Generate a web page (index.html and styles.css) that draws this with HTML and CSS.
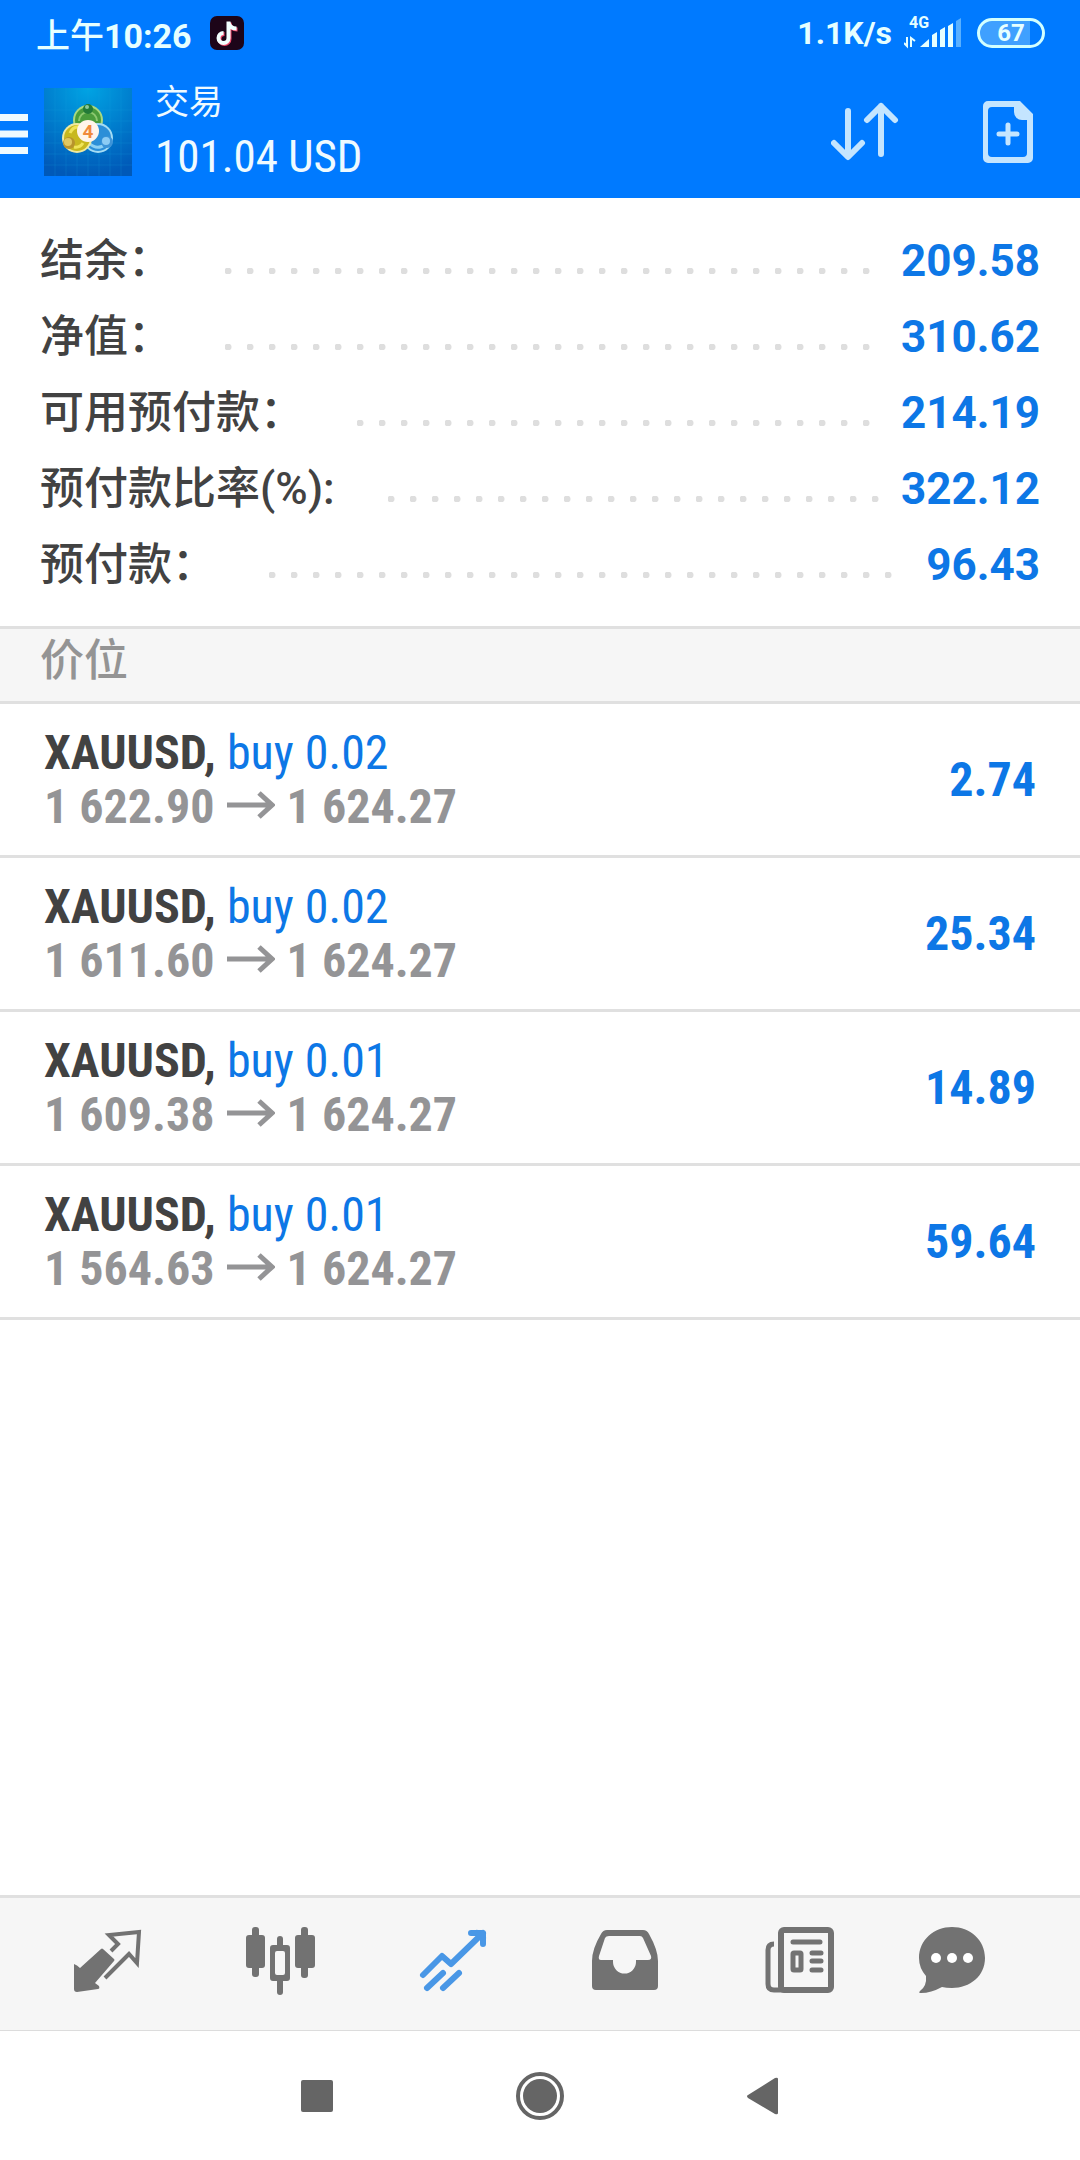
FILE: index.html
```html
<!DOCTYPE html>
<html lang="zh-CN">
<head>
<meta charset="utf-8">
<meta name="viewport" content="width=device-width, initial-scale=1">
<title>交易</title>
<link rel="stylesheet" href="styles.css">
</head>
<body>
<div class="app">
  <div class="status">
    <span class="clock">上午<b>10:26</b></span>
    <svg class="note" width="34" height="34" viewBox="0 0 34 34" aria-hidden="true">
      <rect width="34" height="34" rx="7" fill="#1d0519"/>
      <path d="M18.500 5.500v16.500a5 5 0 1 1-5-5M18.500 6c.5 4 3.500 6.500 8 6.500" fill="none" stroke="#f0486c" stroke-width="4" transform="translate(1 1)"/>
      <path d="M18.500 5.500v16.500a5 5 0 1 1-5-5M18.500 6c.5 4 3.500 6.500 8 6.500" fill="none" stroke="#f2ffff" stroke-width="4"/>
    </svg>
    <span class="speed">1.1K/s</span>
    <svg class="signal" width="58" height="38" viewBox="0 -2 58 38" aria-label="4G">
      <text class="net" x="5" y="12">4G</text>
      <path d="M3 21v9l-3-3M7 31v-9l4 3" fill="none" stroke="#e6ffff" stroke-width="2"/>
      <path d="M16 31l9-8v8zM28 19l5-3v15h-5zM36 14l5-3v20h-5zM44 10l5-3v24h-5z" fill="#e6ffff"/>
      <path d="M52 5l5-3v29h-5z" fill="#59b0ff"/>
    </svg>
    <span class="battery">67</span>
  </div>
  <header class="top">
    <button class="menu" aria-label="菜单">
      <svg width="28" height="40" viewBox="0 0 28 40"><path d="M0 3.500h28M0 20h28M0 36.500h28" stroke="#effaff" stroke-width="7"/></svg>
    </button>
    <svg class="logo" width="88" height="88" viewBox="0 0 88 88" aria-hidden="true">
      <defs>
        <radialGradient id="sea" cx=".5" cy="0" r="1"><stop offset="0" stop-color="#00a4e4"/><stop offset="1" stop-color="#0059b8"/></radialGradient>
      </defs>
      <rect width="88" height="88" fill="url(#sea)"/>
      <path d="M11 0v88M22 0v88M33 0v88M44 0v88M55 0v88M66 0v88M77 0v88M0 22h88M0 33h88M0 44h88M0 55h88M0 66h88M0 77h88" stroke="#1aa0dc" stroke-opacity=".2"/>
      <circle cx="44" cy="32" r="15" fill="#a8d880"/>
      <circle cx="44" cy="32" r="13" fill="#4a9c3c"/>
      <path d="M35 33a9 9 0 0 1 18 0" fill="none" stroke="#8cc870" stroke-width="2"/>
      <circle cx="54" cy="50" r="15" fill="#a4dcf4"/>
      <circle cx="54" cy="50" r="13" fill="#2c8fd8"/>
      <path d="M45 55q8 8 17 1" fill="none" stroke="#8cd0f4" stroke-width="3"/>
      <circle cx="33" cy="50" r="15" fill="#efe9a0"/>
      <circle cx="33" cy="50" r="13" fill="#c8b81e"/>
      <path d="M26 45q3-7 10-6M30 59q6 1 9-4" fill="none" stroke="#f0e458" stroke-width="3"/>
      <circle cx="44" cy="21" r="5" fill="#237a38"/>
      <circle cx="43" cy="19" r="2" fill="#8cc89c"/>
      <circle cx="25" cy="55" r="6" fill="#b8942c"/>
      <circle cx="24" cy="54" r="4" fill="#e0c860"/>
      <circle cx="63" cy="54" r="6" fill="#3c94d8"/>
      <circle cx="62" cy="53" r="4" fill="#8cccf4"/>
      <circle cx="44" cy="43" r="11" fill="#fff4ea"/>
      <text class="mark" x="44" y="50">4</text>
    </svg>
    <div class="heading">
      <h1>交易</h1>
      <p class="profit">101.04 USD</p>
    </div>
    <button class="sort" aria-label="排序">
      <svg width="68" height="60" viewBox="0 0 68 60"><path d="M17 9v45M3 41l14 14 14-14M50 52V4M36 18L50 4l14 14" fill="none" stroke="#c4e5ff" stroke-width="6" stroke-linecap="round" stroke-linejoin="round"/></svg>
    </button>
    <button class="add" aria-label="新订单">
      <svg width="50" height="62" viewBox="0 0 50 62"><path fill-rule="evenodd" d="M5 0h32l13 13v44a5 5 0 0 1-5 5H5a5 5 0 0 1-5-5V5a5 5 0 0 1 5-5zM9 6a4 4 0 0 0-4 4v42a4 4 0 0 0 4 4h31a4 4 0 0 0 4-4V19h-5a8 8 0 0 1-8-8V6z" fill="#c4e5ff"/><path d="M25 24v18M16 33h18" stroke="#c4e5ff" stroke-width="5" stroke-linecap="round"/></svg>
    </button>
  </header>

  <main class="content">
    <dl class="summary">
      <div class="line"><dt>结余：</dt><dd>209.58</dd></div>
      <div class="line"><dt>净值：</dt><dd>310.62</dd></div>
      <div class="line"><dt>可用预付款：</dt><dd>214.19</dd></div>
      <div class="line"><dt>预付款比率(%):</dt><dd>322.12</dd></div>
      <div class="line"><dt>预付款：</dt><dd>96.43</dd></div>
    </dl>
    <h2 class="section">价位</h2>
    <ul class="trades">
      <li class="trade">
        <div><p class="symbol">XAUUSD, <span class="side">buy 0.02</span></p>
        <p class="prices">1 622.90<svg class="arrow" viewBox="0 0 48 28" aria-label="至"><path d="M0 14h45M32 2l13 12-13 12"/></svg>1 624.27</p></div>
        <span class="gain">2.74</span>
      </li>
      <li class="trade">
        <div><p class="symbol">XAUUSD, <span class="side">buy 0.02</span></p>
        <p class="prices">1 611.60<svg class="arrow" viewBox="0 0 48 28" aria-label="至"><path d="M0 14h45M32 2l13 12-13 12"/></svg>1 624.27</p></div>
        <span class="gain">25.34</span>
      </li>
      <li class="trade">
        <div><p class="symbol">XAUUSD, <span class="side">buy 0.01</span></p>
        <p class="prices">1 609.38<svg class="arrow" viewBox="0 0 48 28" aria-label="至"><path d="M0 14h45M32 2l13 12-13 12"/></svg>1 624.27</p></div>
        <span class="gain">14.89</span>
      </li>
      <li class="trade">
        <div><p class="symbol">XAUUSD, <span class="side">buy 0.01</span></p>
        <p class="prices">1 564.63<svg class="arrow" viewBox="0 0 48 28" aria-label="至"><path d="M0 14h45M32 2l13 12-13 12"/></svg>1 624.27</p></div>
        <span class="gain">59.64</span>
      </li>
    </ul>
  </main>

  <nav class="tabs" aria-label="主导航">
    <button aria-label="行情"><svg width="70" height="70" viewBox="0 0 70 70">
      <path d="M29 22q1-1 2 0l11 10q1 1 0 2L23 56l4 3q1 3-1 3L5 65q-3 0-3-3V37q3 1 6 4z" fill="#727272"/>
      <path d="M39 24l7-7-9-9 30-3-2 31-8-9-24 24" fill="none" stroke="#727272" stroke-width="4"/>
    </svg></button>
    <button aria-label="图表"><svg width="70" height="70" viewBox="0 0 70 70" fill="#727272">
      <rect x="1" y="8" width="19" height="33" rx="3"/><rect x="7" y="0" width="7" height="50" rx="3"/>
      <rect x="50" y="8" width="20" height="33" rx="3"/><rect x="56" y="0" width="7" height="51" rx="3"/>
      <rect x="32" y="9" width="6" height="12" rx="3"/><rect x="32" y="50" width="6" height="18" rx="3"/>
      <path fill-rule="evenodd" d="M28 18h14a3 3 0 0 1 3 3v30a3 3 0 0 1-3 3H28a3 3 0 0 1-3-3V21a3 3 0 0 1 3-3zm4 6a2 2 0 0 0-2 2v20a2 2 0 0 0 2 2h6a2 2 0 0 0 2-2V26a2 2 0 0 0-2-2z"/>
    </svg></button>
    <button aria-label="交易" aria-current="page"><svg width="70" height="70" viewBox="0 0 70 70" fill="none" stroke="#4997e6" stroke-width="6" stroke-linecap="round" stroke-linejoin="round">
      <path d="M5 48l19-19 9 8L65 6M53 6h12v11M59 6l6 5M9 61l16-15M25 61l16-15"/>
    </svg></button>
    <button aria-label="历史"><svg width="70" height="70" viewBox="0 0 70 70">
      <path fill-rule="evenodd" d="M16 3h36q4 0 6 4 9 16 9 27v25q0 4-4 4H5q-4 0-4-4V34Q1 22 10 7q2-4 6-4zm2 6q-3 0-4 2L8 29q-1 4 2 4h12v2a11 11 0 0 0 23 0v-2h12q4 0 3-4l-8-18q-1-2-3-2z" fill="#727272"/>
    </svg></button>
    <button aria-label="新闻"><svg width="70" height="70" viewBox="0 0 70 70" fill="none" stroke="#727272" stroke-width="5" stroke-linecap="round">
      <rect x="17" y="3" width="50" height="60" rx="3" stroke-width="6"/>
      <path d="M10 17Q4 17 4 23v34q0 6 6 6h10" stroke-linecap="butt"/>
      <path d="M29 15h27M48 26h9M48 34h9M48 43h9"/>
      <rect x="29" y="26" width="8" height="17" rx="1" />
    </svg></button>
    <button aria-label="消息"><svg width="70" height="70" viewBox="0 0 70 70">
      <path d="M35 0c18 0 33 13 33 31S53 61 35 61q-6 0-10-1-11 6-21 6-3 0-1-2 7-5 6-15Q2 41 2 31C2 13 17 0 35 0z" fill="#727272"/>
      <circle cx="19" cy="31" r="5" fill="#fff"/><circle cx="35" cy="31" r="5" fill="#fff"/><circle cx="51" cy="31" r="5" fill="#fff"/>
    </svg></button>
  </nav>
  <nav class="system" aria-label="系统导航">
    <button aria-label="最近"><svg width="50" height="50" viewBox="0 0 50 50"><rect x="9" y="9" width="32" height="32" rx="2" fill="#656565"/></svg></button>
    <button aria-label="主屏幕"><svg width="50" height="50" viewBox="0 0 50 50"><circle cx="25" cy="25" r="22" fill="none" stroke="#656565" stroke-width="4"/><circle cx="25" cy="25" r="17" fill="#656565"/></svg></button>
    <button aria-label="返回"><svg width="50" height="50" viewBox="0 0 50 50"><path d="M10 24L37 7q3-1 3 1v34q0 2-3 1L10 27q-2-2 0-3z" fill="#656565"/></svg></button>
  </nav>
</div>
</body>
</html>
```
FILE: styles.css
```css
* { box-sizing: border-box; }

body,
h1,
h2,
p,
dl,
dd,
ul {
  margin: 0;
  padding: 0;
}

body {
  background: #fff;
  color: #424242;
  font-family: Roboto, "Noto Sans CJK SC", sans-serif;
}

button {
  display: flex;
  justify-content: center;
  align-items: center;
  padding: 0;
  border: 0;
  background: none;
}

svg { flex: none; }

.app {
  display: flex;
  flex-direction: column;
  min-height: 100vh;
}

.status {
  display: flex;
  align-items: center;
  height: 66px;
  padding: 0 35px 0 36px;
  background: #007aff;
  color: #e6ffff;
  font-size: 32px;
  font-weight: 700;
}

.clock {
  font-size: 34px;
  font-weight: 500;
}

.note { margin-left: 18px; }
.speed { margin-left: auto; }
.signal { margin-left: 12px; }

.net {
  fill: #e6ffff;
  font-size: 16px;
  font-weight: 700;
}

.battery {
  width: 68px;
  margin-left: 15px;
  border: 3px solid #d2ffff;
  border-radius: 15px;
  background: linear-gradient(90deg, #3fa0ff 80%, #007aff 80%);
  font-size: 24px;
  line-height: 24px;
  text-align: center;
}

.top {
  display: flex;
  align-items: center;
  height: 132px;
  padding-right: 47px;
  background: #007aff;
  color: #effaff;
}

.menu { padding-top: 4px; }

.logo { margin-left: 16px; }

.mark {
  fill: #f08a3c;
  font-size: 19px;
  font-weight: 700;
  text-anchor: middle;
}

.heading {
  flex: 1;
  margin-left: 23px;
}

h1 {
  font-size: 34px;
  font-weight: 400;
  line-height: 50px;
}

.profit {
  font-family: "Roboto Condensed", "Liberation Sans Narrow", Roboto, sans-serif;
  font-size: 45px;
  line-height: 60px;
}

.add { margin-left: 84px; }

.content { flex: 1; }

.summary {
  padding: 25px 40px 23px;
  border-bottom: 3px solid #e0e0e0;
}

.line {
  display: flex;
  align-items: center;
  height: 76px;
  font-size: 44px;
  line-height: 76px;
}

.line dt {
  flex: none;
  font-weight: 500;
}

/* dotted leader between the label and its amount */
.line::before {
  content: "";
  order: 1;
  flex: 1;
  height: 6px;
  margin: 20px 20px 0 53px;
  background: radial-gradient(circle at 3px 3px, #dedede 3px, transparent 4px) 0 0 / 22px 6px repeat-x;
}

.line dd {
  order: 2;
  color: #0d77e6;
  font-weight: 700;
}

.section {
  padding: 0 40px 8px;
  border-bottom: 3px solid #e0e0e0;
  background: #f6f6f6;
  color: #949494;
  font-size: 44px;
  font-weight: 500;
  line-height: 64px;
}

.trades { list-style: none; }

.trade {
  display: flex;
  justify-content: space-between;
  align-items: center;
  padding: 22px 44px 21px;
  border-bottom: 3px solid #e0e0e0;
  font-family: "Roboto Condensed", "Liberation Sans Narrow", Roboto, sans-serif;
  font-size: 48px;
  font-weight: 700;
  line-height: 54px;
}

.side {
  color: #0d77e6;
  font-weight: 400;
}

.prices {
  display: flex;
  align-items: center;
  color: #949496;
}

.arrow {
  width: 48px;
  height: 28px;
  margin: 0 12px 4px;
  fill: none;
  stroke: #949496;
  stroke-width: 5;
}

.gain { color: #0d77e6; }

.tabs {
  display: grid;
  grid-template-columns: repeat(5, 173fr) 132fr;
  height: 136px;
  padding: 0 62px 4px 20px;
  border-top: 3px solid #e0e0e0;
  border-bottom: 1px solid #dcdcdc;
  background: #f6f6f6;
}

.system {
  display: grid;
  grid-template-columns: repeat(3, 1fr);
  height: 129px;
  padding: 0 19%;
}
```
